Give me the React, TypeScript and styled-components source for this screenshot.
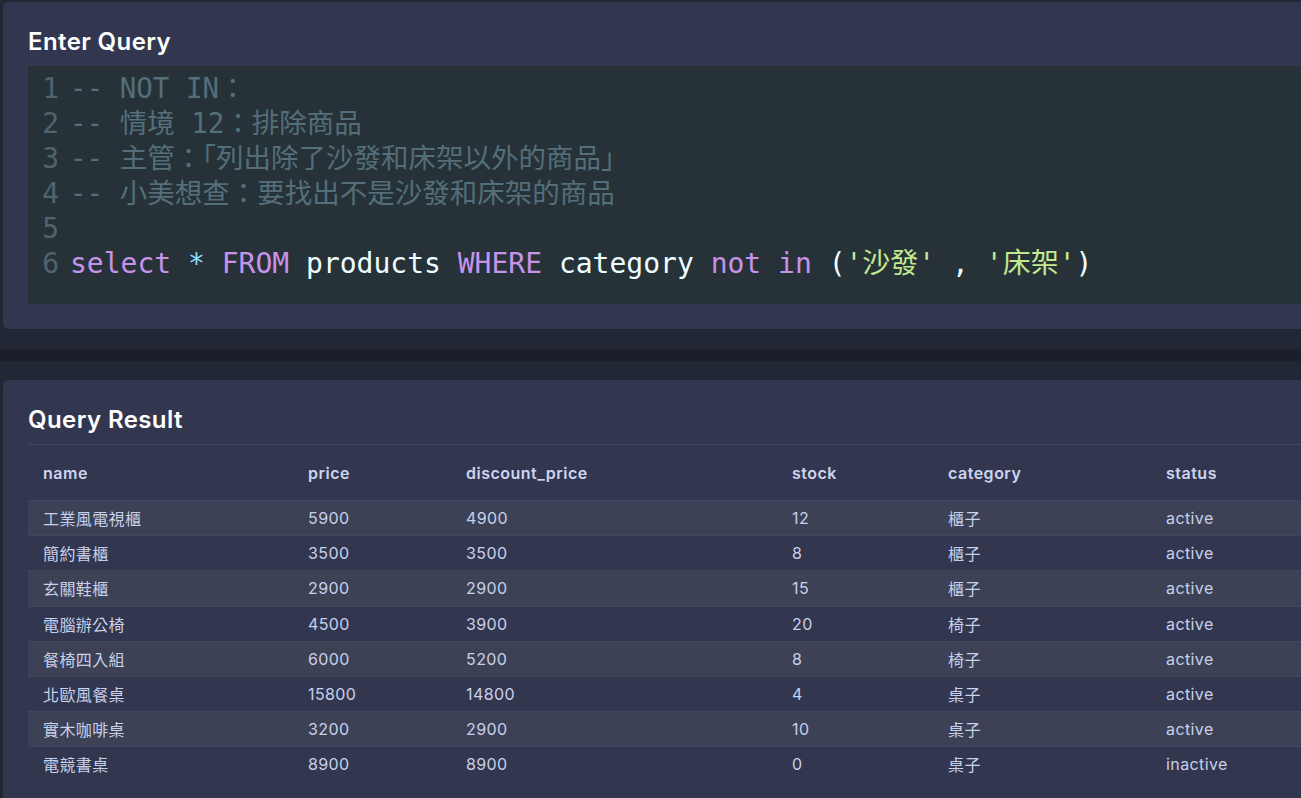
import React from "react";
import styled, { createGlobalStyle } from "styled-components";

const Global = createGlobalStyle`
  html, body {
    margin: 0;
    padding: 0;
    background: #222736;
    overflow: hidden;
  }
  body {
    font-family: Inter, "Noto Sans CJK TC", sans-serif;
  }
`;

const Page = styled.div`
  width: 1420px;
  padding-top: 2px;
  display: flex;
  flex-direction: column;
`;

const Panel = styled.section<{ $height: number }>`
  margin-left: 3px;
  height: ${(p) => p.$height}px;
  box-sizing: border-box;
  background: #32374f;
  border-radius: 5px;
  padding: 24px 0 0 25px;
  display: flex;
  flex-direction: column;
  overflow: hidden;
`;

const Title = styled.h2`
  margin: 0;
  font-family: Inter, sans-serif;
  font-weight: 600;
  font-size: 24px;
  line-height: 32px;
  color: #ffffff;
  letter-spacing: 0.4px;
`;

const Divider = styled.div`
  padding: 20px 0 19px;
  display: flex;
`;

const DividerBar = styled.div`
  flex: 1;
  height: 12px;
  background: #1c1f29;
`;

const Editor = styled.div`
  margin-top: 8px;
  height: 238px;
  box-sizing: border-box;
  background: #263238;
  padding-top: 5px;
  font-family: "DejaVu Sans Mono", "Noto Sans CJK TC", monospace;
  font-size: 28px;
  line-height: 35px;
`;

const Line = styled.div`
  display: flex;
  align-items: baseline;
  white-space: pre;
`;

const Gutter = styled.span`
  width: 17px;
  padding: 0 11px 0 14px;
  text-align: right;
  color: #4f646e;
`;

type TK = "kw" | "op" | "id" | "str" | "cm";

const Tok = styled.span<{ $k: TK }>`
  font-size: ${(p) => (p.$k === "cm" ? "27.5px" : "28px")};
  color: ${(p) =>
    ({
      kw: "#c792ea",
      op: "#89ddff",
      id: "#eeffff",
      str: "#c3e88d",
      cm: "#546e7a",
    })[p.$k]};
`;

const TableTitle = styled(Title)`
  margin-bottom: 8px;
`;

const Table = styled.table`
  border-collapse: collapse;
  width: 1392px;
  table-layout: fixed;
  font-family: Inter, "Noto Sans CJK TC", sans-serif;
  font-size: 16px;
  letter-spacing: 0.4px;
  border-top: 1px solid #414760;
`;

const Col = styled.col<{ $w: number }>`
  width: ${(p) => p.$w}px;
`;

const HeadCell = styled.th`
  text-align: left;
  font-weight: 600;
  color: #cdd5f0;
  height: 56px;
  padding: 0 15px;
  letter-spacing: 0.5px;
  box-sizing: border-box;
`;

const Row = styled.tr<{ $alt: boolean }>`
  background: ${(p) => (p.$alt ? "#3c4155" : "transparent")};
  border-top: 1px solid #414760;
`;

const Cell = styled.td`
  padding: 0 15px;
  height: 34.2px;
  color: #c8d0ea;
  white-space: nowrap;
`;

const columns = [
  { key: "name", w: 265 },
  { key: "price", w: 158 },
  { key: "discount_price", w: 326 },
  { key: "stock", w: 156 },
  { key: "category", w: 218 },
  { key: "status", w: 269 },
];

const rows = [
  ["工業風電視櫃", "5900", "4900", "12", "櫃子", "active"],
  ["簡約書櫃", "3500", "3500", "8", "櫃子", "active"],
  ["玄關鞋櫃", "2900", "2900", "15", "櫃子", "active"],
  ["電腦辦公椅", "4500", "3900", "20", "椅子", "active"],
  ["餐椅四入組", "6000", "5200", "8", "椅子", "active"],
  ["北歐風餐桌", "15800", "14800", "4", "桌子", "active"],
  ["實木咖啡桌", "3200", "2900", "10", "桌子", "active"],
  ["電競書桌", "8900", "8900", "0", "桌子", "inactive"],
];

const code: [TK, string][][] = [
  [["cm", "-- NOT IN："]],
  [["cm", "-- 情境 12：排除商品"]],
  [["cm", "-- 主管：「列出除了沙發和床架以外的商品」"]],
  [["cm", "-- 小美想查：要找出不是沙發和床架的商品"]],
  [],
  [
    ["kw", "select"],
    ["id", " "],
    ["op", "*"],
    ["id", " "],
    ["kw", "FROM"],
    ["id", " products "],
    ["kw", "WHERE"],
    ["id", " category "],
    ["kw", "not"],
    ["id", " "],
    ["kw", "in"],
    ["id", " ("],
    ["str", "'沙發'"],
    ["id", " , "],
    ["str", "'床架'"],
    ["id", ")"],
  ],
];

export default function App() {
  return (
    <>
      <Global />
      <Page>
        <Panel $height={327}>
          <Title>Enter Query</Title>
          <Editor>
            {code.map((toks, i) => (
              <Line key={i}>
                <Gutter>{i + 1}</Gutter>
                {toks.map(([k, t], j) => (
                  <Tok key={j} $k={k}>
                    {t}
                  </Tok>
                ))}
              </Line>
            ))}
          </Editor>
        </Panel>
        <Divider>
          <DividerBar />
        </Divider>
        <Panel $height={440}>
          <TableTitle>Query Result</TableTitle>
          <Table>
            <colgroup>
              {columns.map((c) => (
                <Col key={c.key} $w={c.w} />
              ))}
            </colgroup>
            <thead>
              <tr>
                {columns.map((c) => (
                  <HeadCell key={c.key}>{c.key}</HeadCell>
                ))}
              </tr>
            </thead>
            <tbody>
              {rows.map((r, i) => (
                <Row key={i} $alt={i % 2 === 0}>
                  {r.map((v, j) => (
                    <Cell key={j}>{v}</Cell>
                  ))}
                </Row>
              ))}
            </tbody>
          </Table>
        </Panel>
      </Page>
    </>
  );
}
